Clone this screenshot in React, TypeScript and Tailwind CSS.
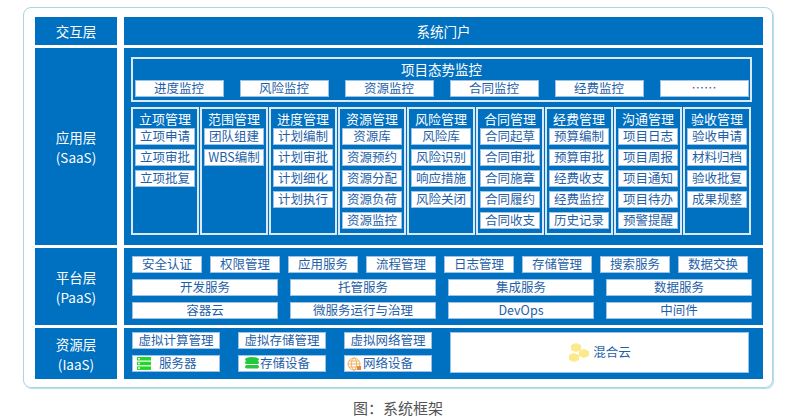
import React from "react";

const B = "bg-[#0070c0]";
const Item = ({ t, cls = "" }: { t: React.ReactNode; cls?: string }) => (
  <div className={`bg-white text-[#1f5fa8] text-[12.5px] leading-none h-[17px] flex items-center justify-center whitespace-nowrap border border-[#9cc3e6] ${cls}`}>{t}</div>
);

const mods: [string, string[]][] = [
  ["立项管理", ["立项申请", "立项审批", "立项批复"]],
  ["范围管理", ["团队组建", "WBS编制"]],
  ["进度管理", ["计划编制", "计划审批", "计划细化", "计划执行"]],
  ["资源管理", ["资源库", "资源预约", "资源分配", "资源负荷", "资源监控"]],
  ["风险管理", ["风险库", "风险识别", "响应措施", "风险关闭"]],
  ["合同管理", ["合同起草", "合同审批", "合同施章", "合同履约", "合同收支"]],
  ["经费管理", ["预算编制", "预算审批", "经费收支", "经费监控", "历史记录"]],
  ["沟通管理", ["项目日志", "项目周报", "项目通知", "项目待办", "预警提醒"]],
  ["验收管理", ["验收申请", "材料归档", "验收批复", "成果规整"]],
];

const Label = ({ a, b, h }: { a: string; b?: string; h: string }) => (
  <div className={`${B} w-[82px] ${h} flex flex-col items-center justify-center text-white text-[13.5px] leading-[20px]`}>
    <div>{a}</div>
    {b && <div>{b}</div>}
  </div>
);

const Server = () => (
  <svg width="14" height="13" viewBox="0 0 14 13"><rect x="0" y="0" width="14" height="3.5" fill="#22d62a"/><rect x="0" y="4.7" width="14" height="3.5" fill="#22d62a"/><rect x="0" y="9.4" width="14" height="3.5" fill="#22d62a"/><rect x="1" y="1" width="2" height="1.5" fill="#fff"/><rect x="1" y="5.7" width="2" height="1.5" fill="#fff"/><rect x="1" y="10.4" width="2" height="1.5" fill="#fff"/></svg>
);
const Disk = () => (
  <svg width="14" height="13" viewBox="0 0 14 13"><ellipse cx="7" cy="2.5" rx="7" ry="2.5" fill="#22c93a"/><rect x="0" y="4" width="14" height="3" rx="1.5" fill="#22c93a"/><rect x="0" y="8" width="14" height="3.5" rx="1.7" fill="#22c93a"/></svg>
);
const Globe = () => (
  <svg width="15" height="14" viewBox="0 0 15 14"><circle cx="7" cy="7" r="6" fill="none" stroke="#f0b060" strokeWidth="1"/><ellipse cx="7" cy="7" rx="2.5" ry="6" fill="none" stroke="#f0b060"/><line x1="1" y1="7" x2="13" y2="7" stroke="#f0b060"/><line x1="2" y1="4" x2="12" y2="4" stroke="#f0b060"/><line x1="2" y1="10" x2="12" y2="10" stroke="#f0b060"/><rect x="10" y="9" width="4" height="4" fill="#e08a3a"/></svg>
);
const Cloud = () => (
  <svg width="22" height="20" viewBox="0 0 22 20"><polygon points="8,0 13,2 13,7 8,9 3,7 3,2" fill="#fbe98a"/><polygon points="16,6 21,8 21,13 16,15 11,13 11,8" fill="#fbe98a"/><polygon points="6,10 11,12 11,17 6,19 1,17 1,12" fill="#fbe98a"/></svg>
);

export default function App() {
  return (
    <div className="w-[793px] h-[419px] bg-white relative" style={{ fontFamily: '"Noto Sans CJK SC", "Noto Sans", sans-serif' }}>
      <div className="ml-[23px] pt-[7px]">
        <div className="w-[750px] h-[381px] border border-[#a9d6e2] rounded-[8px] pl-[11px] pt-[9px] flex flex-col gap-[3px] shadow-[1px_1px_1px_#b9dce6]">
          <div className="flex gap-[7px]">
            <Label a="交互层" h="h-[28px]" />
            <div className={`${B} w-[639px] h-[28px] flex items-center justify-center text-white text-[13.5px]`}>系统门户</div>
          </div>
          <div className="flex gap-[7px]">
            <Label a="应用层" b="(SaaS)" h="h-[197px]" />
            <div className={`${B} w-[639px] h-[197px] pl-[7px] pt-[9px]`}>
              <div className="w-[621px] h-[45px] border-2 border-[#dbe9f6] flex flex-col items-center">
                <div className="text-white text-[13.5px] leading-[18px] mt-[1px]">项目态势监控</div>
                <div className="flex gap-[16px] mt-[2px]">
                  {["进度监控", "风险监控", "资源监控", "合同监控", "经费监控", "……"].map((t, i) => (
                    <Item key={i} t={t} cls="w-[89px]" />
                  ))}
                </div>
              </div>
              <div className="flex gap-[1px] mt-[5px]">
                {mods.map(([h, items]) => (
                  <div key={h} className="w-[68px] h-[128px] border-2 border-[#dbe9f6] flex flex-col items-center">
                    <div className="text-white text-[13px] leading-[19px]">{h}</div>
                    <div className="flex flex-col gap-[4px]">
                      {items.map((t) => <Item key={t} t={t} cls="w-[60px]" />)}
                    </div>
                  </div>
                ))}
              </div>
            </div>
          </div>
          <div className="flex gap-[7px]">
            <Label a="平台层" b="(PaaS)" h="h-[77px]" />
            <div className={`${B} w-[639px] h-[77px] pl-[8px] pt-[8px] flex flex-col gap-[6px]`}>
              <div className="flex gap-[8px]">
                {["安全认证", "权限管理", "应用服务", "流程管理", "日志管理", "存储管理", "搜索服务", "数据交换"].map((t) => (
                  <Item key={t} t={t} cls="w-[70px]" />
                ))}
              </div>
              {[["开发服务", "托管服务", "集成服务", "数据服务"], ["容器云", "微服务运行与治理", "DevOps", "中间件"]].map((r, i) => (
                <div key={i} className="flex gap-[12px]">
                  {r.map((t) => <Item key={t} t={t} cls="w-[146px]" />)}
                </div>
              ))}
            </div>
          </div>
          <div className="flex gap-[7px]">
            <Label a="资源层" b="(IaaS)" h="h-[51px]" />
            <div className={`${B} w-[639px] h-[51px] pl-[8px] pt-[4px] flex gap-[18px]`}>
              <div className="flex flex-col gap-[6px]">
                <div className="flex gap-[18px]">
                  {["虚拟计算管理", "虚拟存储管理", "虚拟网络管理"].map((t) => <Item key={t} t={t} cls="w-[88px]" />)}
                </div>
                <div className="flex gap-[18px]">
                  <Item cls="w-[88px] !justify-start pl-[4px] gap-[8px]" t={<><Server /><span>服务器</span></>} />
                  <Item cls="w-[88px] !justify-start pl-[6px] gap-[1px]" t={<><Disk /><span>存储设备</span></>} />
                  <Item cls="w-[88px] !justify-start pl-[2px] gap-[1px]" t={<><Globe /><span>网络设备</span></>} />
                </div>
              </div>
              <div className="w-[299px] h-[41px] bg-white border border-[#9cc3e6] flex items-center justify-center gap-[3px] text-[#1f5fa8] text-[12.5px]">
                <Cloud /><span>混合云</span>
              </div>
            </div>
          </div>
        </div>
      </div>
      <div className="absolute left-[353px] top-[397px] text-[#555] text-[15px]">图：系统框架</div>
    </div>
  );
}
